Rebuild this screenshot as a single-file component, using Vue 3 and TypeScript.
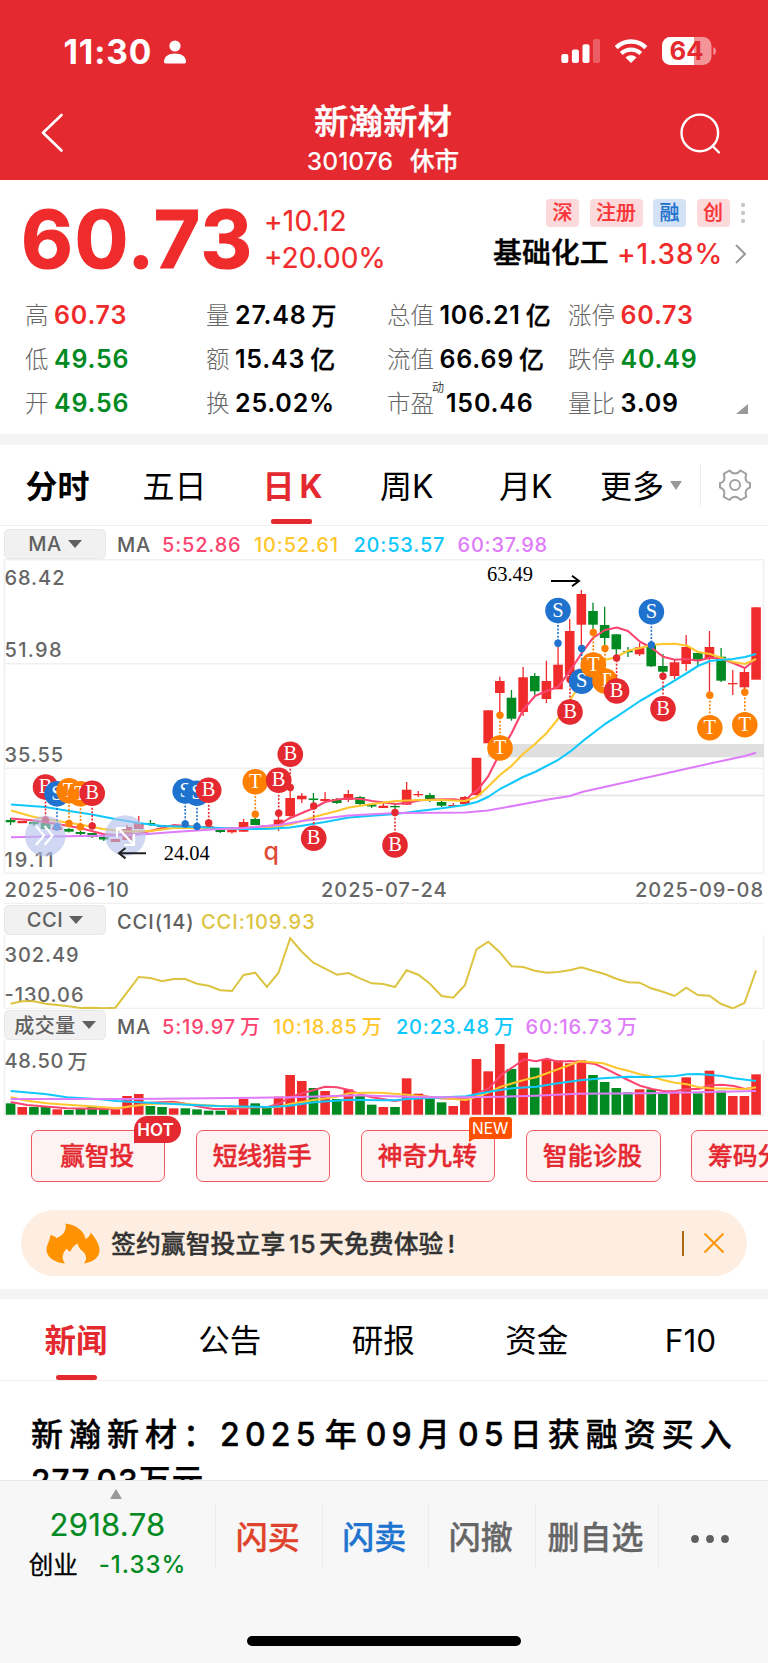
<script setup lang="ts">
interface Stat { label: string; value: string; unit?: string; tone?: string; sup?: string }
interface Marker { t: 'B' | 'S' | 'T'; x: number; y: number; dot: number }

const stats: Stat[] = [
  { label: '高', value: '60.73', tone: 'up' },
  { label: '量', value: '27.48', unit: '万' },
  { label: '总值', value: '106.21', unit: '亿' },
  { label: '涨停', value: '60.73', tone: 'up' },
  { label: '低', value: '49.56', tone: 'down' },
  { label: '额', value: '15.43', unit: '亿' },
  { label: '流值', value: '66.69', unit: '亿' },
  { label: '跌停', value: '40.49', tone: 'down' },
  { label: '开', value: '49.56', tone: 'down' },
  { label: '换', value: '25.02%' },
  { label: '市盈', value: '150.46', sup: '动' },
  { label: '量比', value: '3.09' },
]

const RED = '#f02b2b'
const GREEN = '#018a22'
const STEP = 11.648
const cx = (i: number) => 10.6 + i * STEP

// colour, body top, body bottom, high, low
const candles: [string, number, number, number, number][] = [
  ['g', 820, 822.3, 818, 825], ['r', 821, 823.2, 821, 823], ['g', 822, 824.2, 820, 826], ['g', 823, 829, 822, 829],
  ['r', 827, 830, 827, 830], ['g', 829, 831.7, 828, 832.5], ['g', 832, 834, 831, 835], ['g', 833, 837, 833, 838],
  ['g', 837, 839.5, 836, 841], ['r', 839, 842, 839, 842], ['r', 827, 840, 825, 840], ['r', 823, 829, 816, 829],
  ['g', 823, 824.7, 820, 826], ['g', 825, 827, 825, 827], ['r', 825, 827, 825, 827], ['g', 825, 827, 824, 828],
  ['g', 827, 829, 827, 829], ['r', 826, 828, 826, 828], ['g', 829, 832, 828, 833], ['r', 829.5, 832.3, 828, 833.5],
  ['r', 822, 831.7, 819, 832], ['g', 819, 825, 818, 825], ['g', 825.5, 827.5, 825, 828], ['r', 819.7, 826.7, 817, 831],
  ['r', 798, 816, 787, 818], ['r', 795.7, 799.3, 793, 803], ['g', 798.5, 800, 793, 805], ['r', 799, 801, 792, 803],
  ['g', 799, 803, 798, 804], ['r', 794, 800, 790, 802], ['g', 797, 804, 796, 805], ['g', 804.5, 806.5, 803.5, 808],
  ['r', 805.7, 808, 803, 808], ['g', 806, 807.3, 804, 815], ['r', 789.7, 804.7, 782, 805], ['r', 794, 795.3, 791, 797],
  ['g', 795, 801, 793, 802], ['g', 802, 805.7, 801, 807], ['r', 805, 806.5, 803, 807], ['r', 797, 804, 796, 804],
  ['r', 757.8, 795.2, 757.8, 795], ['r', 710.3, 743.3, 710.3, 743], ['r', 681, 693, 676.7, 713], ['g', 697.7, 718.7, 690, 720.7],
  ['r', 677.3, 712, 667, 716], ['g', 676, 691.3, 673, 695], ['r', 681, 699, 660.7, 703], ['r', 664.7, 689.3, 643, 689],
  ['r', 631, 675, 619, 680], ['r', 594, 624.7, 590, 649], ['g', 611, 624.7, 602.7, 632], ['g', 625, 638, 606.7, 648],
  ['g', 634.3, 649.3, 634, 658], ['g', 651, 652.3, 647, 657], ['r', 647.3, 654.3, 643, 656], ['g', 645, 666.3, 643, 667],
  ['g', 666, 671.7, 654, 676], ['r', 662.3, 676, 660, 679], ['r', 647, 664, 635, 671], ['g', 653, 659.7, 651.7, 666],
  ['r', 647, 658.5, 631, 694], ['g', 656.7, 680.7, 648, 682], ['r', 683, 684.3, 670, 695], ['r', 672, 687.3, 668, 691],
  ['r', 607.3, 679.7, 607.3, 679],
]

const ma5 = '11,818.5 34,820.5 57,824 80,828 103,834 115,835 127,834 139,833.5 150,831 162,828 174,825 197,827 220,829 244,828 267,826 279,825 288,819 302,813 314,808 325,802 337,799.5 349,798.5 361,799 372,801 384,802.5 396,804 407,803 419,800.5 431,799.5 454,799.3 465,800.7 472,794 476.7,791 488,776.7 500,753 511.7,733 523,710 535,696 547,690.7 558,687 570,671 582,652.7 593,638 605,630 616.7,627.5 628,631 640,641.7 652,648 663,656.7 675,659.7 687,659 698,660.7 710,657.7 722,658.7 733,663 745,668 756,659'
const ma10 = '11,810.5 34,817 57,821 80,824.5 103,829 127,831.5 150,831 174,828 197,828 220,829 244,829 267,828 279,826 290,824.5 302,821 314,817 325,814 337,811 349,807.5 372,804 396,801 419,800 442,800 465,801 477,797 488,786.7 500,775 511.7,765.7 523,754 535,744 547,732.7 558,719 570,700 582,682 593,668 605,660 616.7,657 628,650.7 640,648 652,645 663,644 675,643.7 687,645.7 698,652 710,654 722,658 733,662 745,664 756,659'
const ma20 = '11,804.5 45,807 69,811 92,814.5 115,819 139,823 162,826 197,827 220,828 244,829 267,829 290,827.5 302,825.7 325,822 349,817.5 372,815.7 396,814 419,811 442,808.3 465,805 477,802 488,797 500,789 511.7,783 523,777 535,772 558,760 570,751.7 582,741.7 605,724 616.7,716.7 640,701 663,687.7 687,673 698,666 710,661 722,659.7 733,659 745,657 756,654'
const ma60 = '11,837.3 80,836 127,835.5 174,832 220,829 244,828 279,825 302,821 349,815.5 396,813 442,812.7 465,812.5 488,810.5 548,799.5 570,796 583,791.7 628,781.7 663,774 710,763.5 745,756 756,752.7'

const markers: Marker[] = [
  { t: 'B', x: 45.5, y: 787, dot: 820 }, { t: 'S', x: 57, y: 793.7, dot: 827 }, { t: 'T', x: 69, y: 790.7, dot: 823.5 },
  { t: 'T', x: 80.5, y: 793.8, dot: 827 }, { t: 'B', x: 92.2, y: 793.3, dot: 826 }, { t: 'S', x: 185.2, y: 791, dot: 824 },
  { t: 'S', x: 197, y: 793.3, dot: 826.5 }, { t: 'B', x: 208.7, y: 790.3, dot: 823 }, { t: 'T', x: 255.3, y: 781.7, dot: 814.3 },
  { t: 'B', x: 290.3, y: 754.3, dot: 787.5 }, { t: 'B', x: 278.7, y: 780.3, dot: 813.3 }, { t: 'B', x: 313.7, y: 838.3, dot: 806 },
  { t: 'B', x: 395, y: 845, dot: 812.5 }, { t: 'T', x: 500, y: 748, dot: 715.3 }, { t: 'S', x: 558, y: 610.5, dot: 643.3 },
  { t: 'B', x: 570, y: 712, dot: 679.5 }, { t: 'S', x: 581.7, y: 681.3, dot: 648.5 }, { t: 'T', x: 605, y: 681, dot: 648.5 },
  { t: 'T', x: 593.3, y: 665, dot: 632.5 }, { t: 'B', x: 616.6, y: 691, dot: 658 }, { t: 'S', x: 651.4, y: 611.8, dot: 645 },
  { t: 'B', x: 663, y: 708.8, dot: 676.3 }, { t: 'T', x: 709.8, y: 727.8, dot: 695.3 }, { t: 'T', x: 744.8, y: 724.8, dot: 692.2 },
]
const markerFill = { B: '#e42930', S: '#1f72cd', T: '#ff8000' }

const cciRaw = [311, 304, 304, 311, 315, 319, 324, 323, 325, 323, 277, 231, 234, 244, 237, 237, 251, 257, 271, 273, 225, 218, 261, 218, 115, 155, 188, 206, 224, 219, 235, 250, 252, 261, 211, 224, 251, 288, 293, 256, 148, 125, 157, 199, 201, 212, 218, 216, 211, 202, 212, 222, 236, 247, 248, 265, 275, 288, 263, 285, 287, 312, 325, 309, 211]
const cci = cciRaw.map((v, i) => `${cx(i).toFixed(1)},${(900 + v / 3).toFixed(1)}`).join(' ')

const volTop = [610, 621, 621, 621, 628, 630, 626, 620, 628, 628, 588, 582, 618, 621, 625, 625, 628, 632, 632, 630, 597, 610, 624, 590, 525, 543, 564, 573, 597, 568, 588, 614, 621, 621, 535, 581, 597, 607, 618, 600, 477, 514, 432, 507, 458, 503, 477, 481, 490, 481, 525, 546, 564, 577, 568, 568, 582, 578, 532, 580, 512, 572, 588, 588, 523]
const volGreen = [0, 2, 3, 5, 6, 7, 8, 12, 13, 15, 16, 17, 18, 21, 22, 26, 28, 30, 31, 33, 36, 37, 43, 45, 50, 51, 52, 53, 55, 56, 59, 61]
const volumes = volTop.map((v, i) => ({ y: 900 + v / 3, tone: volGreen.includes(i) ? GREEN : RED }))

const vma5 = '10.7,1102 27,1105 67,1108.3 107,1109 120,1108.3 133,1105.7 150,1102.7 173,1101.7 187,1104 200,1106.7 213,1109 233,1109 257,1107.3 267,1107.3 279,1103.7 290,1097.3 302,1093.3 314,1090 325,1086.7 337,1087.3 349,1090 360,1094.3 372,1097.3 384,1099.3 395,1101 407,1099 423,1096 440,1098.3 466,1099.3 477,1093.3 489,1088.3 501,1075 512,1067.7 524,1059.3 536,1061.3 547,1058.7 558,1061.7 570,1061 582,1062.3 595,1064 607,1069.3 628,1080 640,1085.7 652,1089 663,1091 675,1091.3 687,1089 699,1089 710,1085.3 722,1084.7 734,1086 745,1089 756,1087.3'
const vma10 = '10.7,1097.3 27,1100.7 47,1103.3 67,1104.7 87,1106 117,1108.3 133,1106 150,1104 173,1103.3 207,1105.3 233,1106.7 267,1107.3 279,1106.7 290,1104 314,1100 337,1096.7 349,1093.3 367,1092.7 380,1092.7 407,1094.7 430,1097.3 466,1100 489,1092.3 501,1086.7 524,1080 536,1077.3 558,1069.3 580,1061.3 603,1063.3 617,1068 628,1070.7 640,1074.3 652,1076.7 663,1080 675,1082.7 687,1084.3 699,1087.3 710,1088.3 734,1088.7 745,1089.3 756,1087.3'
const vma20 = '10.7,1091 45,1094 67,1097.3 100,1099.3 117,1101 150,1102.7 187,1104.7 217,1106 267,1107 287,1106 314,1102.3 349,1099.7 380,1100.3 395,1100.3 407,1099 466,1096.3 489,1091.7 512,1088.3 536,1086.7 558,1083.3 580,1080.3 603,1078.3 628,1076.7 652,1077 675,1076 687,1074.3 699,1074 722,1076 734,1078.3 756,1081'
const vma60 = '10.7,1099 133,1099 290,1097.3 360,1095.3 380,1096 430,1097.3 466,1097.3 501,1096.7 536,1095.7 577,1093.7 647,1093.3 699,1092.3 756,1091'

const periods = [
  { label: '分时', cls: 'bold p0' }, { label: '五日', cls: 'p1' }, { label: '日K', cls: 'active p2' },
  { label: '周K', cls: 'p3' }, { label: '月K', cls: 'p4' }, { label: '更多', cls: 'p5' },
]
const priceMA = ['5:52.86', '10:52.61', '20:53.57', '60:37.98']
const volMA = ['5:19.97', '10:18.85', '20:23.48', '60:16.73']
const tools = [
  { label: '赢智投', badge: 'HOT' }, { label: '短线猎手' }, { label: '神奇九转', badge: 'NEW' },
  { label: '智能诊股' }, { label: '筹码分布' },
]
const newsTabs = ['新闻', '公告', '研报', '资金', 'F10']
</script>

<template>
  <div class="phone">
    <header class="top">
      <div class="status">
        <span class="time">11:30</span>
        <svg class="person" width="22" height="24" viewBox="0 0 22 24"><circle cx="11" cy="6" r="5.6" fill="#fff" /><path d="M0 22C0 16.500 4.500 13.600 11 13.600S22 16.500 22 22C22 23 21.400 23.400 20.500 23.400H1.500C.6 23.400 0 23 0 22Z" fill="#fff" /></svg>
        <svg class="sys" width="156" height="30" viewBox="560 36 156 30">
          <g fill="#fff">
            <rect x="561.300" y="54" width="7" height="9" rx="2" /><rect x="571.900" y="49.500" width="7" height="13.500" rx="2" />
            <rect x="582.500" y="44.300" width="7" height="18.700" rx="2" /><rect x="593" y="39" width="7" height="24" rx="2" opacity=".25" />
            <path d="M631 63L625.500 57.600A7.800 7.800 0 0 1 636.500 57.600Z" />
          </g>
          <g fill="none" stroke="#fff" stroke-width="4.300"><path d="M616.200 47.600A21 21 0 0 1 645.800 47.600" /><path d="M621.300 53.500A14 14 0 0 1 640.700 53.500" /></g>
          <rect x="662" y="37" width="49.500" height="28" rx="8.500" fill="#fff" opacity=".5" />
          <path d="M670.500 37H694V65H670.500A8.500 8.500 0 0 1 662 56.500V45.500A8.500 8.500 0 0 1 670.500 37Z" fill="#fff" />
          <path d="M713.300 47Q716 48 716 51T713.300 55Z" fill="#fff" opacity=".5" />
          <text x="686.500" y="60" text-anchor="middle" textLength="34" lengthAdjust="spacingAndGlyphs" class="batt">64</text>
        </svg>
      </div>
      <div class="nav">
        <svg width="60" height="50" viewBox="30 108 60 50" fill="none" stroke="#fff" stroke-width="2.600" stroke-linecap="round" stroke-linejoin="round"><path d="M61.500 115L43 132.800L61.500 150.500" /></svg>
        <div class="title"><h1>新瀚新材</h1><p><span>301076</span><span>休市</span></p></div>
        <svg width="60" height="50" viewBox="670 108 60 50" fill="none" stroke="#fff" stroke-width="2.400" stroke-linecap="round"><circle cx="699.800" cy="132.900" r="18.300" /><path d="M712.500 146L719 152.500" /></svg>
      </div>
    </header>

    <section class="quote">
      <div class="summary">
        <div class="price">60.73</div>
        <div class="chg"><span>+10.12</span><span>+20.00%</span></div>
        <div class="meta">
          <div class="tags"><i>深</i><i>注册</i><i class="blue">融</i><i>创</i>
            <svg width="6" height="22" viewBox="0 0 6 22" fill="#c8c8c8"><circle cx="3" cy="3" r="2.200" /><circle cx="3" cy="11" r="2.200" /><circle cx="3" cy="19" r="2.200" /></svg>
          </div>
          <div class="industry"><b>基础化工</b><em>+1.38%</em>
            <svg width="12" height="20" viewBox="0 0 12 20" fill="none" stroke="#999" stroke-width="2"><path d="M1 1L10 10L1 19" /></svg>
          </div>
        </div>
      </div>
      <div class="stats">
        <div v-for="s in stats" :key="s.label" class="stat">
          <span class="lab">{{ s.label }}<sup v-if="s.sup">{{ s.sup }}</sup></span>
          <span class="val" :class="s.tone">{{ s.value }}</span>
          <span v-if="s.unit" class="unit">{{ s.unit }}</span>
        </div>
        <span class="corner"></span>
      </div>
    </section>

    <nav class="periods">
      <span v-for="p in periods" :key="p.label" :class="p.cls"><template v-if="p.label === '日K'">日<b>K</b></template><template v-else>{{ p.label }}</template></span>
      <i class="caret"></i>
      <svg width="36" height="42" viewBox="717 464 36 42" fill="none" stroke="#a0a0a0" stroke-width="2" stroke-linejoin="round">
        <path d="M729.500 470.500Q732 473.500 735 473.500T740.500 470.500L746.200 473.800Q745 478 746 480.300T750 483V487.500Q747 488.500 746 490.700T746.200 496.800L740.500 500Q738 496.800 735 496.800T729.500 500L723.800 496.800Q725 493 724 490.700T720 487.500V483Q723 482.500 724 480.300T723.800 473.800Z" /><circle cx="735" cy="485" r="5" />
      </svg>
    </nav>

    <div class="legend first">
      <div class="sel"><span>MA</span><i></i></div>
      <div class="vals price-vals"><span>MA</span><span v-for="(m, i) in priceMA" :key="m" :class="'m' + i">{{ m }}</span></div>
    </div>

    <svg class="chart" width="768" height="345" viewBox="0 559 768 345">
      <g stroke="#f0f0f0" stroke-width="1.500" fill="none"><path d="M4.500 559.700H763.500V873.200H4.500ZM4 663.700H764M4 768.300H764M4 903.500H764" /></g>
      <rect x="488" y="744" width="276" height="13.300" fill="#dfdfdf" />
      <path d="M476 795.500H764" stroke="#e4e4e4" stroke-width="1.500" />
      <g class="axis"><text x="4.500" y="585" textLength="60">68.42</text><text x="4.500" y="657.300" textLength="57">51.98</text><text x="4.500" y="761.700" textLength="58.500">35.55</text><text x="4.500" y="866.500" textLength="49">19.11</text></g>
      <g v-for="(c, i) in candles" :key="i" :fill="c[0] === 'r' ? RED : GREEN">
        <rect :x="cx(i) - 0.65" :y="c[3]" width="1.300" :height="c[4] - c[3]" /><rect :x="cx(i) - 4.8" :y="c[1]" width="9.600" :height="c[2] - c[1]" />
      </g>
      <g fill="none" stroke-width="2.100" stroke-linejoin="round">
        <polyline :points="ma5" stroke="#fb4570" /><polyline :points="ma10" stroke="#ffc62e" /><polyline :points="ma20" stroke="#10c8fb" /><polyline :points="ma60" stroke="#df7cfb" />
      </g>
      <g v-for="(m, i) in markers" :key="'m' + i">
        <path :d="`M${m.x} ${m.y}V${m.dot}`" :stroke="markerFill[m.t]" stroke-width="1.600" stroke-dasharray="2 1.600" />
        <circle :cx="m.x" :cy="m.dot" r="3.700" :fill="markerFill[m.t]" />
        <circle :cx="m.x" :cy="m.y" r="12.800" :fill="markerFill[m.t]" />
        <text class="mk" :x="m.x" :y="m.y + 6" text-anchor="middle">{{ m.t }}</text>
      </g>
      <g fill="#b4c0ec" opacity=".62"><circle cx="45.300" cy="836" r="20.300" /><circle cx="125.300" cy="835.500" r="20.300" /></g>
      <path d="M36 826L44 835.500L36 845M44.500 826L52.500 835.500L44.500 845M118 828L133 844M117 837V828H126M134 834V845H124" fill="none" stroke="#fff" stroke-width="2.200" />
      <g fill="none" stroke-width="2"><path d="M146 853.200H119M125.500 848L119 853.200L125.500 858.400" stroke="#222" /><path d="M551 581H579M572 575.800L579 581L572 586.200" stroke="#000" /></g>
      <text class="serif" x="163.700" y="860" textLength="46">24.04</text><text class="serif" x="487" y="581" textLength="46">63.49</text>
      <text x="263.500" y="860" class="q">q</text>
      <g class="axis"><text x="4.500" y="896.500" textLength="124.500">2025-06-10</text><text x="321" y="896.500" textLength="125.500">2025-07-24</text><text x="635" y="896.500" textLength="128">2025-09-08</text></g>
    </svg>

    <div class="legend cci">
      <div class="sel"><span>CCI</span><i></i></div>
      <div class="vals cci-vals"><span>CCI(14)</span><span class="gold">CCI:109.93</span></div>
    </div>
    <svg class="chart" width="768" height="74" viewBox="0 935 768 74">
      <path d="M4.500 935V1008.500H763.500V935" fill="none" stroke="#f0f0f0" stroke-width="1.500" />
      <g class="axis"><text x="4.500" y="962" textLength="74">302.49</text><text x="4.500" y="1002" textLength="79">-130.06</text></g>
      <polyline :points="cci" fill="none" stroke="#dcc441" stroke-width="2" />
    </svg>

    <div class="legend vol">
      <div class="sel"><span>成交量</span><i></i></div>
      <div class="vals vol-vals"><span>MA</span><span v-for="(m, i) in volMA" :key="m" :class="'m' + i">{{ m }}<u>万</u></span></div>
    </div>
    <svg class="chart" width="768" height="78" viewBox="0 1040 768 78">
      <path d="M4.500 1040V1115.500H763.500V1040" fill="none" stroke="#f0f0f0" stroke-width="1.500" />
      <g class="axis"><text x="4.500" y="1067.500" textLength="59">48.50</text><text x="67.500" y="1068.500">万</text></g>
      <rect v-for="(v, i) in volumes" :key="i" :x="cx(i) - 4.8" :y="v.y" width="9.600" :height="1114.7 - v.y" :fill="v.tone" />
      <g fill="none" stroke-width="2" stroke-linejoin="round">
        <polyline :points="vma5" stroke="#fb4570" /><polyline :points="vma10" stroke="#ffc62e" /><polyline :points="vma20" stroke="#10c8fb" /><polyline :points="vma60" stroke="#df7cfb" />
      </g>
    </svg>

    <section class="tools">
      <div v-for="t in tools" :key="t.label" class="tool">{{ t.label }}<em v-if="t.badge" :class="t.badge.toLowerCase()">{{ t.badge }}</em></div>
    </section>

    <section class="promo-wrap">
      <div class="promo">
        <svg width="54" height="41" viewBox="46 1222 54 41"><path fill="#ff9200" d="M65.500 1222.500C76 1223.500 84 1230 85.500 1238C88.500 1236.500 90.500 1234.500 90.500 1231.500C95.500 1237 99.500 1243 99.500 1249.500C99.500 1256 93.500 1261 84 1262.500C86.500 1259.500 87 1255.500 84 1251.500C81.500 1249 79 1248 77.500 1242.500C74.500 1244 71.500 1247 70.500 1250.500C69 1250.500 67.500 1249.500 67 1247.500C62.500 1251.500 61 1257.500 65 1262.500C54 1261.500 46.500 1256 46.500 1248.500C46.500 1244.500 49.500 1240.500 50.500 1234C53 1234.500 55.500 1235.500 56.500 1237C63 1234.500 67 1229.500 65.500 1222.500Z" /></svg>
        <p>签约赢智投立享<span>15</span>天免费体验<b>!</b></p>
        <i></i>
        <svg width="22" height="22" viewBox="0 0 22 22" stroke="#ff9a10" stroke-width="2.200"><path d="M1.500 1.500L20.500 20.500M20.500 1.500L1.500 20.500" /></svg>
      </div>
    </section>

    <nav class="news-tabs"><span v-for="(n, i) in newsTabs" :key="n" :class="{ on: i === 0 }">{{ n }}</span></nav>
    <article class="news"><h2>新瀚新材：<span class="year">2025</span>年<span class="month">09</span>月<span class="day">05</span>日获融资买入</h2><h3>277.03万元</h3></article>

    <footer class="bar">
      <div class="index"><i class="tri"></i><strong>2918.78</strong><p><span>创业</span><em>-1.33%</em></p></div>
      <div class="acts">
        <span class="buy">闪买</span><span class="sell">闪卖</span><span>闪撤</span><span class="wide">删自选</span>
        <span class="more"><svg width="40" height="10" viewBox="0 0 40 10" fill="#606060"><circle cx="5" cy="5" r="3.900" /><circle cx="20" cy="5" r="3.900" /><circle cx="35" cy="5" r="3.900" /></svg></span>
      </div>
      <div class="home"></div>
    </footer>
  </div>
</template>

<style>
body { background: #fff; }
</style>

<style scoped>
* { box-sizing: border-box; margin: 0; font-style: normal; }
.phone { width: 768px; height: 1663px; overflow: hidden; font-family: Inter, "Noto Sans CJK SC", sans-serif; color: #000; background: #fff; }
svg { display: block; flex: none; }
span, b, em, h1, h2, h3, p { white-space: nowrap; }

.top { height: 180px; background: #e42930; color: #fff; }
.status { height: 96px; display: flex; align-items: flex-start; padding: 36px 0 0 63.500px; }
.time { font-size: 33.500px; line-height: 33px; font-weight: 700; letter-spacing: .9px; width: 100.500px; }
.person { margin-top: 4px; }
.sys { margin: 0 0 0 374px; }
.batt { font: 700 25px Inter, sans-serif; fill: #e42930; }
.nav { height: 84px; display: flex; justify-content: space-between; padding: 12px 38px 0 30px; }
.title { width: 300px; text-align: center; padding-left: 6px; }
.title h1 { font-size: 34.500px; line-height: 38px; font-weight: 500; margin-top: -5px; -webkit-text-stroke: .4px; }
.title p { display: flex; justify-content: center; gap: 17px; font-size: 24.600px; line-height: 28px; font-weight: 500; margin-top: 6px; }
.title p span:last-child { -webkit-text-stroke: .25px; }

.quote { height: 265px; border-bottom: 11px solid #f4f4f4; }
.summary { display: flex; height: 113px; }
.price { width: 264px; padding: 19px 0 0 21px; font-size: 80px; line-height: 80px; font-weight: 700; letter-spacing: 1.500px; color: #f02b2b; -webkit-text-stroke: 1.200px; }
.chg { display: flex; flex-direction: column; padding-top: 23px; font-size: 28px; line-height: 37px; color: #f02b2b; width: 140px; -webkit-text-stroke: .2px; }
.chg span:first-child { letter-spacing: .3px; }
.meta { margin-left: auto; padding-right: 21px; }
.tags { display: flex; justify-content: flex-end; align-items: center; padding: 19px 1px 0 0; gap: 10.500px; }
.tags i { height: 28px; padding: 0 6.500px; border-radius: 4px; background: #fcdadb; color: #f93438; font-size: 20px; line-height: 28px; font-weight: 500; -webkit-text-stroke: .2px; }
.tags i.blue { background: #d3e3f5; color: #1f72cd; }
.industry { display: flex; align-items: center; justify-content: flex-end; margin-top: 8px; height: 38px; }
.industry b { font-size: 28.900px; line-height: 36px; font-weight: 500; margin-top: -2px; -webkit-text-stroke: .4px; }
.industry em { font-size: 28px; font-weight: 500; letter-spacing: .8px; color: #f02b2b; margin: 0 12px 0 8.500px; }
.stats { position: relative; display: grid; grid-template-columns: repeat(4, 181px); grid-auto-rows: 44px; padding-left: 25px; }
.stat { display: flex; align-items: center; height: 43.500px; }
.lab { color: #666; font-size: 23.500px; font-weight: 300; position: relative; top: -1px; margin-right: 5.500px; }
.lab sup { position: absolute; right: -10px; top: -4px; font-size: 12px; line-height: 14px; color: #444; font-weight: 400; }
.lab:has(sup) { margin-right: 12px; }
.val { font-size: 25px; font-weight: 600; letter-spacing: .8px; }
.unit { font-size: 25px; font-weight: 500; margin: -2px 0 0 5px; -webkit-text-stroke: .35px; }
.up { color: #f02b2b; }
.down { color: #018a22; }
.corner { position: absolute; right: 20px; top: 111px; border-left: 12px solid transparent; border-bottom: 10px solid #999; }

.periods { height: 81px; border-bottom: 1px solid #f0f0f0; display: flex; align-items: center; padding-left: 25.500px; font-size: 32px; }
.periods span { position: relative; line-height: 83px; height: 80px; }
.periods .bold { font-weight: 600; }
.periods .active { color: #e42930; font-weight: 600; }
.periods .active b { margin-left: 5px; font-weight: 700; }
.periods .active::after { content: ""; position: absolute; left: 8px; width: 41px; height: 5px; border-radius: 2px; bottom: 1px; background: #e42930; }
.p0 { width: 117px; } .p1 { width: 120px; } .p2 { width: 117.500px; } .p3 { width: 119px; } .p4 { width: 101px; } .p5 { width: 70px; }
.caret { border: 6px solid transparent; border-top: 9px solid #999; border-bottom: 0; width: 12px; }
.periods svg { margin-left: 18px; border-left: 1.500px solid #eee; box-sizing: content-box; padding-left: 16px; }

.legend { display: flex; padding-left: 4px; color: #606060; font-size: 20px; font-weight: 500; height: 31px; }
.legend.first { height: 33px; padding-top: 3px; }
.sel { width: 102px; height: 29.500px; border-radius: 5px; background: #f1f1f1; border: 1px solid #e8e8e8; display: flex; align-items: center; justify-content: center; gap: 6px; letter-spacing: .5px; }
.cci .sel, .vol .sel { margin-top: 1px; }
.sel i { border: 7px solid transparent; border-top: 8px solid #606060; border-bottom: 0; }
.vals { display: flex; line-height: 32px; margin-left: 11px; letter-spacing: .8px; }
.cci .vals, .vol .vals { line-height: 37px; }
.price-vals span:nth-child(1) { width: 45px; } .price-vals span:nth-child(2) { width: 92px; } .price-vals span:nth-child(3) { width: 99.500px; } .price-vals span:nth-child(4) { width: 104px; }
.cci-vals span:first-child { width: 84px; }
.cci-vals { letter-spacing: .95px; }
.vol-vals span:nth-child(1) { width: 45px; } .vol-vals span:nth-child(2) { width: 111px; } .vol-vals span:nth-child(3) { width: 123px; } .vol-vals span:nth-child(4) { width: 129.500px; }
.vals u { text-decoration: none; margin-left: 4px; font-size: 20px; }
.m0 { color: #fb4570; } .m1 { color: #ffc62e; } .m2 { color: #10c8fb; } .m3 { color: #df7cfb; } .gold { color: #dcc441; }
.axis text { font: 500 20px Inter, "Noto Sans CJK SC", sans-serif; fill: #666; }
.mk { font: 20.500px "Liberation Serif", serif; fill: #fff; }
.serif { font: 20.500px "Liberation Serif", serif; }
.q { font: 500 25px Inter, sans-serif; fill: #dd4b38; }

.tools { height: 92px; padding: 12px 0 0 31px; display: flex; gap: 30.800px; }
.tool { position: relative; flex: none; width: 134.300px; height: 51.500px; border: 1.200px solid #ef5a61; border-radius: 7px; background: #fef3f3; color: #e42930; font-size: 24.800px; line-height: 50px; font-weight: 500; text-align: center; text-indent: -2px; -webkit-text-stroke: .35px; }
.tool em { position: absolute; color: #fff; text-align: center; text-indent: 0; -webkit-text-stroke: 0; }
.tool .hot { left: 102px; top: -15px; width: 47px; height: 27px; border-radius: 14px 14px 14px 0; background: #e42930; font-size: 17px; line-height: 28px; font-weight: 600; padding-right: 4px; }
.tool .new { left: 106.500px; top: -14px; width: 43px; height: 22px; border-radius: 3px 3px 3px 0; background: #ff5000; font-size: 15.500px; line-height: 23px; font-weight: 400; }
.tool .new::after { content: ""; position: absolute; left: 0; bottom: -2.500px; border-top: 3px solid #ff5000; border-right: 5px solid transparent; }

.promo-wrap { height: 89px; padding: 0 21px; border-bottom: 10px solid #f4f4f4; }
.promo { height: 66px; border-radius: 33px; background: #fdeee1; display: flex; align-items: center; padding: 0 22px 0 25px; }
.promo p { font-size: 24.800px; font-weight: 500; color: #333; margin: -2px 0 0 11px; letter-spacing: .1px; -webkit-text-stroke: .35px; }
.promo p span { margin: 0 2.500px 0 4px; letter-spacing: .8px; }
.promo p b { margin-left: 4px; font-weight: 500; }
.promo > i { width: 2px; height: 25px; background: #ad6a14; margin: 0 19.500px 0 auto; }

.news-tabs { height: 82px; display: grid; grid-template-columns: repeat(5, 1fr); border-bottom: 1.500px solid #efefef; text-align: center; font-size: 31.500px; line-height: 84px; }
.news-tabs span { position: relative; height: 80.500px; text-indent: -1.500px; }
.news-tabs .on { color: #e42930; font-weight: 600; }
.news-tabs .on::after { content: ""; position: absolute; left: 56px; width: 41px; height: 5px; bottom: 0; border-radius: 3px; background: #e42930; }
.news { height: 99px; padding: 31px 0 0 31px; overflow: hidden; }
.news h2 { font-size: 32px; line-height: 46px; font-weight: 500; letter-spacing: 6px; -webkit-text-stroke: .4px; }
.news h2 span { letter-spacing: 5.200px; }
.news .year { margin: 0 4px 0 -1px; } .news .month { margin: 0 1px 0 3px; } .news .day { margin: 0 1px 0 2px; }
.news h3 { font-size: 31.500px; line-height: 46px; font-weight: 500; letter-spacing: 1.200px; -webkit-text-stroke: .4px; }

.bar { height: 183px; background: #f7f7f7; border-top: 1.500px solid #e9e9e9; display: grid; grid-template-columns: 215px 1fr; grid-template-rows: 155px 28px; }
.index { position: relative; text-align: center; padding-top: 8px; display: flex; flex-direction: column; align-items: center; }
.tri { border: 6.500px solid transparent; border-bottom: 10px solid #999; border-top: 0; margin-left: 16px; }
.index strong { font-size: 31px; line-height: 36px; font-weight: 400; color: #018a22; margin-top: 8px; letter-spacing: .3px; -webkit-text-stroke: .2px; }
.index p { display: flex; gap: 21px; align-items: center; font-size: 24.500px; line-height: 36px; margin-top: 4px; }
.index p span { -webkit-text-stroke: .3px; }
.index em { color: #018a22; font-size: 24px; font-weight: 500; letter-spacing: 1px; }
.acts { display: grid; grid-template-columns: 106.500px 106.500px 106.500px 123px 1fr; height: 68px; margin-top: 21px; }
.acts span { border-left: 1.500px solid #ededed; text-align: center; text-indent: -2px; font-size: 32px; line-height: 71px; height: 68px; font-weight: 500; color: #666; -webkit-text-stroke: .3px; }
.acts .buy { color: #e0432c; } .acts .sell { color: #1f74cf; }
.acts .more { display: flex; align-items: center; padding: 5px 0 0 31px; }
.home { grid-column: 1 / 3; width: 274px; height: 10px; border-radius: 5px; background: #000; margin: 0 auto; }
</style>
